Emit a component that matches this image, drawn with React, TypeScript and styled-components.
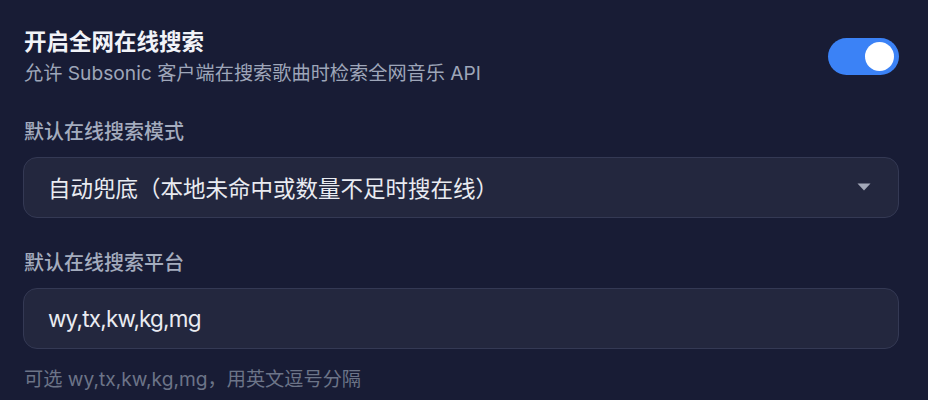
import React, { useState } from "react"
import styled, { createGlobalStyle } from "styled-components"

const GlobalStyle = createGlobalStyle`
  html, body {
    margin: 0;
    padding: 0;
    background: #181c35;
  }
  body {
    font-family: Inter, "Noto Sans CJK SC", sans-serif;
    -webkit-font-smoothing: antialiased;
  }
`

export default function App() {
  const [enabled, setEnabled] = useState(true)
  const [platforms, setPlatforms] = useState("wy,tx,kw,kg,mg")

  return (
    <>
      <GlobalStyle />
      <Page>
        <HeaderRow>
          <HeaderText>
            <Title>开启全网在线搜索</Title>
            <Subtitle>允许 Subsonic 客户端在搜索歌曲时检索全网音乐 API</Subtitle>
          </HeaderText>
          <Toggle $on={enabled} onClick={() => setEnabled(!enabled)} aria-pressed={enabled}>
            <Knob />
          </Toggle>
        </HeaderRow>

        <Field>
          <Label>默认在线搜索模式</Label>
          <SelectBox>
            <span>自动兜底（本地未命中或数量不足时搜在线）</span>
            <svg width='14' height='8' viewBox='0 0 14 8'>
              <path d='M0.5 0.5 L13.5 0.5 L7 7.5 Z' fill='#a3a8b8' />
            </svg>
          </SelectBox>
        </Field>

        <Field>
          <Label>默认在线搜索平台</Label>
          <TextInput value={platforms} onChange={(e) => setPlatforms(e.target.value)} />
          <Hint>可选 wy,tx,kw,kg,mg，用英文逗号分隔</Hint>
        </Field>
      </Page>
    </>
  )
}

const Page = styled.div`
  padding: 26px 29px 0 23px;
  display: flex;
  flex-direction: column;
`

const HeaderRow = styled.div`
  display: flex;
  justify-content: space-between;
  align-items: center;
  padding-left: 1px;
`

const HeaderText = styled.div`
  display: flex;
  flex-direction: column;
`

const Title = styled.div`
  font-size: 22.5px;
  line-height: 31.5px;
  font-weight: 700;
  color: #f1f3f8;
`

const Subtitle = styled.div`
  margin-top: 2px;
  font-size: 19.2px;
  line-height: 27px;
  color: #9ea6b9;
`

const Toggle = styled.button<{ $on: boolean }>`
  width: 71px;
  height: 37px;
  border: none;
  border-radius: 999px;
  padding: 0 5px;
  margin-top: 1px;
  background: ${(p) => (p.$on ? "#3b82f6" : "#3a3f58")};
  display: flex;
  align-items: center;
  justify-content: ${(p) => (p.$on ? "flex-end" : "flex-start")};
  cursor: pointer;
`

const Knob = styled.span`
  width: 29px;
  height: 29px;
  border-radius: 50%;
  background: #ffffff;
`

const Field = styled.div`
  margin-top: 30px;
  display: flex;
  flex-direction: column;
`

const Label = styled.div`
  padding-left: 1px;
  font-size: 20px;
  line-height: 30px;
  font-weight: 500;
  color: #a4acbe;
  margin-bottom: 10px;
`

const SelectBox = styled.div`
  box-sizing: border-box;
  height: 61px;
  padding: 0 27px 0 24px;
  border: 1px solid #343954;
  border-radius: 14px;
  background: #23273e;
  display: flex;
  align-items: center;
  justify-content: space-between;
  font-size: 22.5px;
  color: #e9ebf1;
  cursor: pointer;
`

const TextInput = styled.input`
  box-sizing: border-box;
  height: 61px;
  width: 100%;
  padding: 0 24px;
  border: 1px solid #343954;
  border-radius: 14px;
  background: #23273e;
  font-family: Inter, "Noto Sans CJK SC", sans-serif;
  font-size: 22.5px;
  letter-spacing: -0.8px;
  color: #e9ebf1;
  outline: none;
`

const Hint = styled.div`
  margin-top: 17px;
  padding-left: 1px;
  font-size: 19.2px;
  line-height: 27px;
  color: #6c7488;
`
